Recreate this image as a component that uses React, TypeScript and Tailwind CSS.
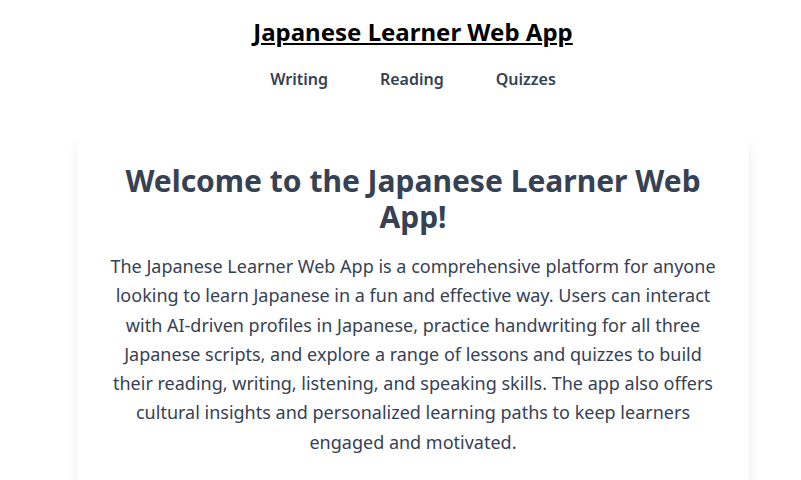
export default function App() {
  return (
    <div className="min-h-screen bg-white pl-[25px]" style={{ fontFamily: '"Noto Sans", sans-serif' }}>
      <header className="flex flex-col items-center pt-4">
        <h1 className="text-2xl leading-8 font-bold text-black underline">Japanese Learner Web App</h1>
        <nav className="mt-[19px] flex gap-[52px] text-base leading-6 font-semibold text-gray-700">
          <a href="#">Writing</a>
          <a href="#">Reading</a>
          <a href="#">Quizzes</a>
        </nav>
      </header>
      <main className="mx-auto mt-10 w-[672px] rounded-lg bg-white p-8 shadow-lg">
        <h2 className="mb-[17px] text-center text-3xl leading-9 font-bold text-gray-700">Welcome to the Japanese Learner Web App!</h2>
        <p className="text-center text-lg leading-relaxed text-gray-700">
          The Japanese Learner Web App is a comprehensive platform for anyone looking to learn Japanese in a fun and effective way. Users can interact with AI-driven profiles in Japanese, practice handwriting for all three Japanese scripts, and explore a range of lessons and quizzes to build their reading, writing, listening, and speaking skills. The app also offers cultural insights and personalized learning paths to keep learners engaged and motivated.
        </p>
      </main>
    </div>
  );
}
